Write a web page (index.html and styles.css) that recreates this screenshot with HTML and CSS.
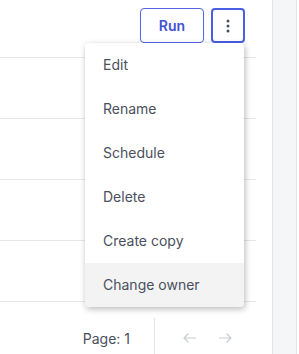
FILE: index.html
```html
<!DOCTYPE html>
<html lang="en">
<head>
  <meta charset="UTF-8">
  <title>Queries</title>
  <link rel="stylesheet" href="styles.css">
</head>
<body>
  <div class="layout">
    <div class="main">
      <div class="toolbar">
        <button class="btn-run">Run</button>
        <button class="btn-more" aria-label="More actions">
          <svg width="4" height="14" viewBox="0 0 4 14"><circle cx="2" cy="2" r="1.5"/><circle cx="2" cy="7" r="1.5"/><circle cx="2" cy="12" r="1.5"/></svg>
        </button>
        <ul class="menu">
          <li>Edit</li>
          <li>Rename</li>
          <li>Schedule</li>
          <li>Delete</li>
          <li>Create copy</li>
          <li class="active">Change owner</li>
        </ul>
      </div>
      <div class="row"></div>
      <div class="row"></div>
      <div class="row"></div>
      <div class="row"></div>
      <div class="pager">
        <div class="pager-label">Page: 1</div>
        <div class="pager-nav">
          <svg class="arrow" width="13" height="10" viewBox="0 0 13 10"><path d="M12.5 5H1M5 1 1 5l4 4"/></svg>
          <svg class="arrow" width="13" height="10" viewBox="0 0 13 10"><path d="M0.5 5H12M8 1l4 4-4 4"/></svg>
        </div>
      </div>
    </div>
    <div class="side"></div>
  </div>
</body>
</html>
```

FILE: styles.css
```css
body {
  margin: 0;
  font-family: Inter, 'Noto Sans', sans-serif;
  font-size: 14px;
  color: #4a505c;
  background: #fff;
}
.layout {
  display: flex;
  height: 354px;
  overflow: hidden;
}
.main {
  width: 256px;
  padding-right: 16px;
}
.toolbar {
  position: relative;
  display: flex;
  justify-content: flex-end;
  align-items: flex-start;
  gap: 7px;
  height: 49px;
  padding: 8px 11px 0 0;
  border-bottom: 1px solid #e6e7ea;
}
.btn-run {
  width: 64px;
  height: 35px;
  border: 1px solid #5366e8;
  border-radius: 4px;
  background: #fff;
  color: #3f51d6;
  font-family: Inter, sans-serif;
  font-weight: 600;
  font-size: 14px;
}
.btn-more {
  width: 34px;
  height: 35px;
  border: 2px solid #4b5ee6;
  border-radius: 4px;
  background: #fff;
  display: flex;
  align-items: center;
  justify-content: center;
  padding: 0;
}
.btn-more svg {
  fill: #4a505c;
}
.menu {
  position: absolute;
  top: 43px;
  left: 85px;
  width: 159px;
  margin: 0;
  padding: 0;
  list-style: none;
  background: #fff;
  border-radius: 4px;
  box-shadow: 1px 2px 6px rgba(0, 0, 0, 0.28);
  z-index: 2;
  overflow: hidden;
}
.menu li {
  height: 44px;
  line-height: 44px;
  padding-left: 18px;
}
.menu li.active {
  background: #f3f3f4;
}
.row {
  height: 60px;
  border-bottom: 1px solid #e6e7ea;
}
.pager {
  display: flex;
  justify-content: flex-end;
  padding-top: 16px;
}
.pager-label {
  display: flex;
  align-items: center;
  height: 40px;
  padding-right: 24px;
}
.pager-nav {
  display: flex;
  align-items: center;
  gap: 23px;
  height: 40px;
  padding: 0 24px 0 28px;
  border-left: 1px solid #e3e4e7;
}
.arrow {
  fill: none;
  stroke: #c9ccd1;
  stroke-width: 1.2;
  stroke-linecap: round;
  stroke-linejoin: round;
}
.side {
  width: 23px;
  border-left: 1px solid #e2e4e8;
  border-right: 1px solid #e2e4e8;
  background: #f5f6f8;
}
```
